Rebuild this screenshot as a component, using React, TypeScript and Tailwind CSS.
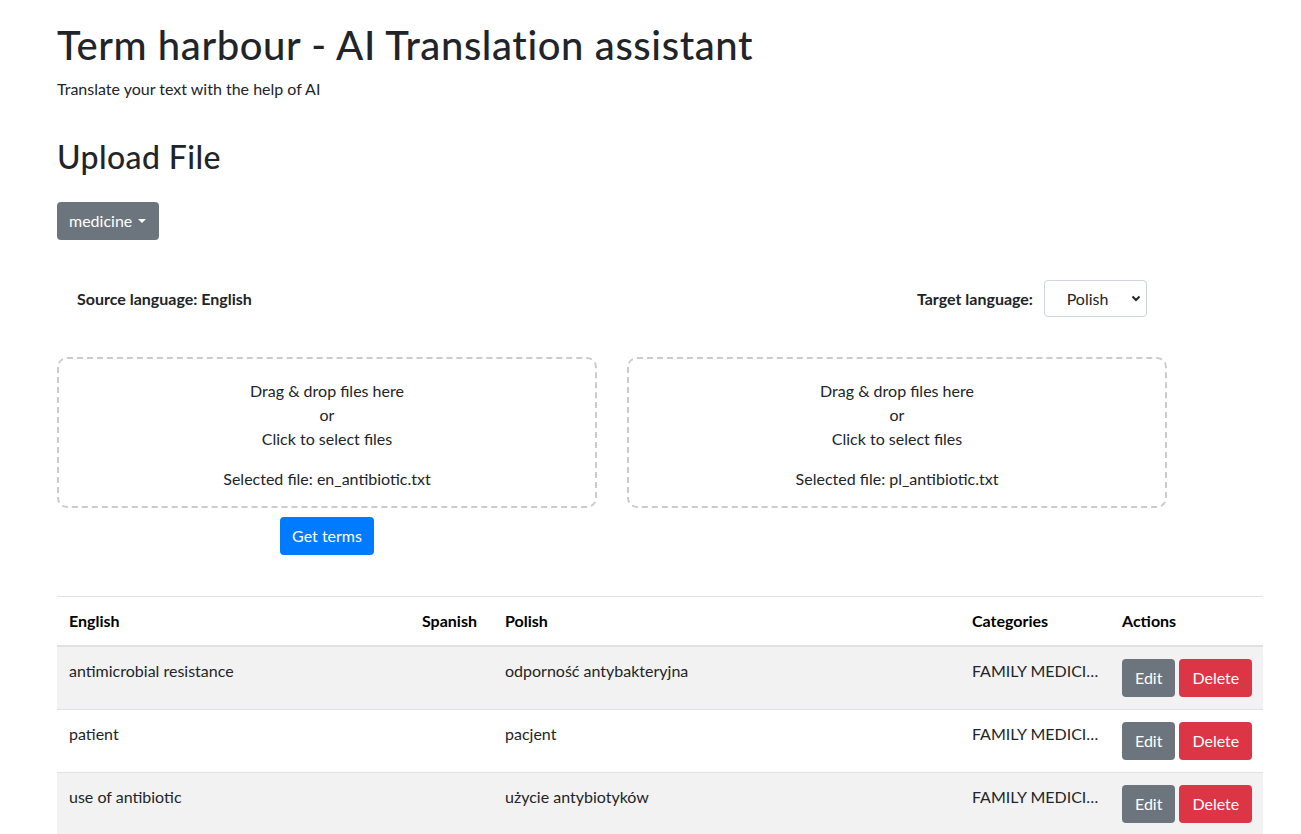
import React from "react";

const rows = [
  { en: "antimicrobial resistance", es: "", pl: "odporność antybakteryjna", cat: "FAMILY MEDICINE" },
  { en: "patient", es: "", pl: "pacjent", cat: "FAMILY MEDICINE" },
  { en: "use of antibiotic", es: "", pl: "użycie antybiotyków", cat: "FAMILY MEDICINE" },
];

function DropZone({ file }: { file: string }) {
  return (
    <div className="rounded-[10px] border-2 border-dashed border-[#cccccc] pt-[20px] pb-[15px] text-center leading-6">
      <p>Drag &amp; drop files here</p>
      <p>or</p>
      <p>Click to select files</p>
      <p className="mt-4">Selected file: {file}</p>
    </div>
  );
}

export default function App() {
  return (
    <div className="min-h-screen bg-white font-['Lato',sans-serif] text-base text-[#212529]">
      <div className="pl-[57px] pr-[38px] pt-[21px]">
        <h1 className="text-[40px] font-medium leading-[1.2] tracking-[0.6px]">Term harbour - AI Translation assistant</h1>
        <p className="mt-2 leading-6">Translate your text with the help of AI</p>

        <h2 className="mt-[37px] text-[32px] font-medium leading-[1.2] tracking-[0.4px]">Upload File</h2>

        <button className="mt-[26px] flex h-[38px] items-center rounded bg-[#6c757d] pl-3 pr-[13px] text-white">
          medicine
          <span className="ml-[6px] inline-block h-0 w-0 border-x-[4.8px] border-t-[4.8px] border-x-transparent border-t-white" />
        </button>

        <div className="w-[1110px]">
          <div className="mt-[40px] flex items-center justify-between px-[20px]">
            <span className="font-bold">Source language: English</span>
            <div className="flex items-center gap-[11px]">
              <span className="font-bold">Target language:</span>
              <div className="relative">
                <select
                  defaultValue="Polish"
                  className="h-[37px] w-[103px] appearance-none rounded border border-[#ced4da] bg-white pr-4 text-center text-[#212529]"
                >
                  <option>Polish</option>
                  <option>Spanish</option>
                </select>
                <svg
                  className="pointer-events-none absolute right-[6px] top-[14px]"
                  width="10"
                  height="8"
                  viewBox="0 0 10 8"
                  fill="none"
                  stroke="#212529"
                  strokeWidth="2"
                >
                  <path d="M1.5 2.5 5 6l3.5-3.5" />
                </svg>
              </div>
            </div>
          </div>

          <div className="mt-[40px] grid grid-cols-2 gap-[30px]">
            <div className="flex flex-col items-center">
              <div className="w-full">
                <DropZone file="en_antibiotic.txt" />
              </div>
              <button className="mt-[9px] h-[38px] rounded bg-[#007bff] px-3 text-white">Get terms</button>
            </div>
            <div>
              <DropZone file="pl_antibiotic.txt" />
            </div>
          </div>
        </div>

        <table className="mt-[41px] w-full table-fixed border-collapse">
          <colgroup>
            <col className="w-[353px]" />
            <col className="w-[83px]" />
            <col className="w-[467px]" />
            <col className="w-[150px]" />
            <col className="w-[153px]" />
          </colgroup>
          <thead>
            <tr className="border-t border-[#dee2e6] text-left text-black">
              <th className="border-b-2 border-[#dee2e6] p-3 font-bold leading-6">English</th>
              <th className="border-b-2 border-[#dee2e6] p-3 font-bold leading-6">Spanish</th>
              <th className="border-b-2 border-[#dee2e6] p-3 font-bold leading-6">Polish</th>
              <th className="border-b-2 border-[#dee2e6] p-3 font-bold leading-6">Categories</th>
              <th className="border-b-2 border-[#dee2e6] p-3 font-bold leading-6">Actions</th>
            </tr>
          </thead>
          <tbody>
            {rows.map((r, i) => (
              <tr key={r.en} className={`border-t border-[#dee2e6] ${i % 2 === 0 ? "bg-[#f2f2f2]" : "bg-white"}`}>
                <td className="p-3 align-top leading-6">{r.en}</td>
                <td className="p-3 align-top leading-6">{r.es}</td>
                <td className="p-3 align-top leading-6">{r.pl}</td>
                <td className="py-3 pl-3 pr-1 align-top leading-6">
                  <div className="max-w-[134px] truncate">{r.cat}</div>
                </td>
                <td className="p-3 align-top">
                  <div className="flex gap-1">
                    <button className="h-[38px] rounded bg-[#6c757d] px-[13px] text-white">Edit</button>
                    <button className="h-[38px] rounded bg-[#dc3545] px-[13px] text-white">Delete</button>
                  </div>
                </td>
              </tr>
            ))}
          </tbody>
        </table>
      </div>
    </div>
  );
}
